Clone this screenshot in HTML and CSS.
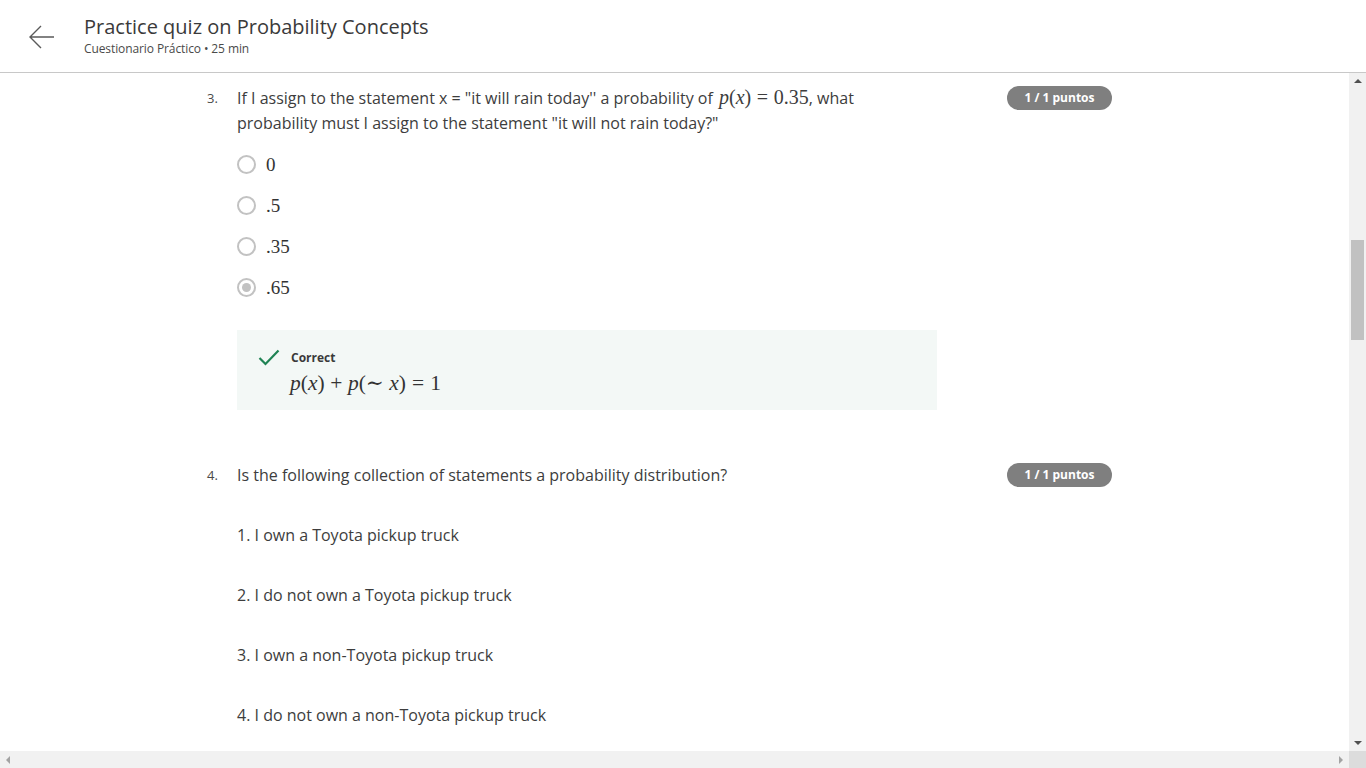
FILE: index.html
```html
<!DOCTYPE html>
<html lang="en">
<head>
<meta charset="utf-8">
<title>Practice quiz on Probability Concepts</title>
<link rel="stylesheet" href="styles.css">
</head>
<body>
<div class="app">
  <header class="header">
    <button class="back" aria-label="Back">
      <svg width="26" height="24" viewBox="0 0 26 24"><path d="M1 12 H25 M12 1 L1 12 L12 23" fill="none" stroke="#5a5a5a" stroke-width="1.4"/></svg>
    </button>
    <div class="titles">
      <h1 class="title">Practice quiz on Probability Concepts</h1>
      <div class="subtitle">Cuestionario Práctico • 25 min</div>
    </div>
  </header>
  <div class="body">
    <main class="viewport">
      <section class="question q3">
        <div class="num">3.</div>
        <div class="content">
          <div class="prompt">If I assign to the statement x = "it will rain today'' a probability of <span class="math"><i>p</i>(<i>x</i>)<span class="op">=</span>0.35</span>, what<br>probability must I assign to the statement "it will not rain today?"</div>
          <ul class="options">
            <li class="option"><span class="radio"></span><span class="opt-text">0</span></li>
            <li class="option"><span class="radio"></span><span class="opt-text">.5</span></li>
            <li class="option"><span class="radio"></span><span class="opt-text">.35</span></li>
            <li class="option"><span class="radio checked"></span><span class="opt-text">.65</span></li>
          </ul>
          <div class="feedback">
            <svg class="check" width="22" height="17" viewBox="0 0 22 17"><path d="M1.5 9 L7.5 15 L20.5 1.5" fill="none" stroke="#1f8354" stroke-width="2.2"/></svg>
            <div class="fb-body">
              <div class="fb-label">Correct</div>
              <div class="fb-math"><i>p</i>(<i>x</i>)<span class="bin">+</span><i>p</i>(∼&#8197;<i>x</i>)<span class="op">=</span>1</div>
            </div>
          </div>
        </div>
        <div class="badge">1 / 1 puntos</div>
      </section>
      <section class="question q4">
        <div class="num">4.</div>
        <div class="content">
          <div class="prompt">Is the following collection of statements a probability distribution?</div>
          <div class="statements">
            <p>1. I own a Toyota pickup truck</p>
            <p>2. I do not own a Toyota pickup truck</p>
            <p>3. I own a non-Toyota pickup truck</p>
            <p>4. I do not own a non-Toyota pickup truck</p>
          </div>
        </div>
        <div class="badge">1 / 1 puntos</div>
      </section>
    </main>
    <div class="vscroll">
      <span class="arrow up"></span>
      <div class="vtrack"><div class="vthumb"></div></div>
      <span class="arrow down"></span>
    </div>
  </div>
  <div class="hscroll">
    <div class="hbar">
      <span class="arrow left"></span>
      <span class="arrow right"></span>
    </div>
    <div class="corner"></div>
  </div>
</div>
</body>
</html>
```

FILE: styles.css
```css
* { box-sizing: border-box; }
html, body { margin: 0; padding: 0; }
body {
  width: 1366px;
  height: 768px;
  overflow: hidden;
  background: #fff;
  font-family: "Open Sans", "Noto Sans", sans-serif;
  color: #3d3d3d;
}
.app {
  display: grid;
  grid-template-rows: 73px 1fr 17px;
  height: 768px;
}
.header {
  display: flex;
  align-items: flex-start;
  border-bottom: 1px solid #c8c8c8;
  padding-left: 29px;
}
.back {
  border: 0;
  background: none;
  padding: 0;
  margin-top: 25px;
  width: 26px;
  height: 24px;
  display: block;
}
.back svg { display: block; }
.titles { margin-left: 29px; padding-top: 13px; }
.title {
  margin: 0;
  font-size: 20px;
  font-weight: 400;
  line-height: 28px;
  color: #3a3a3a;
}
.subtitle {
  font-size: 12px;
  line-height: 16px;
  color: #4a4a4a;
  letter-spacing: -0.1px;
}
.body {
  display: grid;
  grid-template-columns: 1fr 17px;
  min-height: 0;
}
.viewport {
  overflow: hidden;
  padding-left: 207px;
}
.question {
  display: flex;
  width: 905px;
  padding-top: 13px;
}
.num {
  width: 30px;
  font-size: 13px;
  line-height: 25px;
  color: #4a4a4a;
}
.content { width: 700px; }
.prompt {
  font-size: 16px;
  line-height: 25px;
  color: #3d3d3d;
}
.math, .fb-math, .opt-text {
  font-family: "Liberation Serif", "DejaVu Serif", serif;
}
.math { font-size: 20px; line-height: 20px; margin-left: 2px; }
.op { margin: 0 0.28em; }
.bin { margin: 0 0.26em; }
.badge {
  margin-left: auto;
  width: 105px;
  height: 24px;
  border-radius: 12px;
  background: #7f7f7f;
  color: #fff;
  font-size: 12px;
  font-weight: 700;
  line-height: 24px;
  text-align: center;
}
.options {
  list-style: none;
  margin: 8px 0 0;
  padding: 0;
}
.option {
  height: 41px;
  display: flex;
  align-items: center;
}
.radio {
  width: 19px;
  height: 19px;
  border: 2px solid #c2c2c2;
  border-radius: 50%;
  display: flex;
  align-items: center;
  justify-content: center;
}
.radio.checked::after {
  content: "";
  width: 9px;
  height: 9px;
  border-radius: 50%;
  background: #c2c2c2;
}
.opt-text {
  margin-left: 10px;
  font-size: 19px;
  color: #333;
}
.feedback {
  margin: 22px 0 0;
  height: 80px;
  background: #f3f8f6;
  display: flex;
  align-items: flex-start;
  padding: 19px 0 0 21px;
}
.check { display: block; margin-top: 0; }
.fb-body { margin-left: 11px; }
.fb-label {
  font-size: 12px;
  font-weight: 700;
  line-height: 18px;
  color: #3a3a3a;
}
.fb-math {
  font-size: 21.5px;
  line-height: 28px;
  color: #333;
  margin-top: 2px;
  margin-left: -1px;
}
.q3 { padding-bottom: 40px; }
.statements { margin-top: 35px; }
.statements p {
  margin: 0 0 36px;
  font-size: 16px;
  line-height: 24px;
}
.vscroll {
  background: #f1f1f1;
  display: flex;
  flex-direction: column;
  align-items: center;
}
.vtrack { flex: 1; width: 100%; }
.vthumb {
  margin: 153px 2px 0;
  height: 100px;
  background: #c1c1c1;
}
.arrow { display: block; width: 0; height: 0; }
.arrow.up {
  margin: 6px 0 4px;
  border-left: 4px solid transparent;
  border-right: 4px solid transparent;
  border-bottom: 4px solid #505050;
}
.arrow.down {
  margin: 4px 0 6px;
  border-left: 4px solid transparent;
  border-right: 4px solid transparent;
  border-top: 4px solid #505050;
}
.hscroll {
  display: grid;
  grid-template-columns: 1fr 17px;
}
.hbar {
  background: #f1f1f1;
  display: flex;
  align-items: center;
  justify-content: space-between;
  padding: 0 6px;
}
.arrow.left {
  border-top: 4px solid transparent;
  border-bottom: 4px solid transparent;
  border-right: 4px solid #a3a3a3;
}
.arrow.right {
  border-top: 4px solid transparent;
  border-bottom: 4px solid transparent;
  border-left: 4px solid #a3a3a3;
}
.corner { background: #dcdcdc; }
```
